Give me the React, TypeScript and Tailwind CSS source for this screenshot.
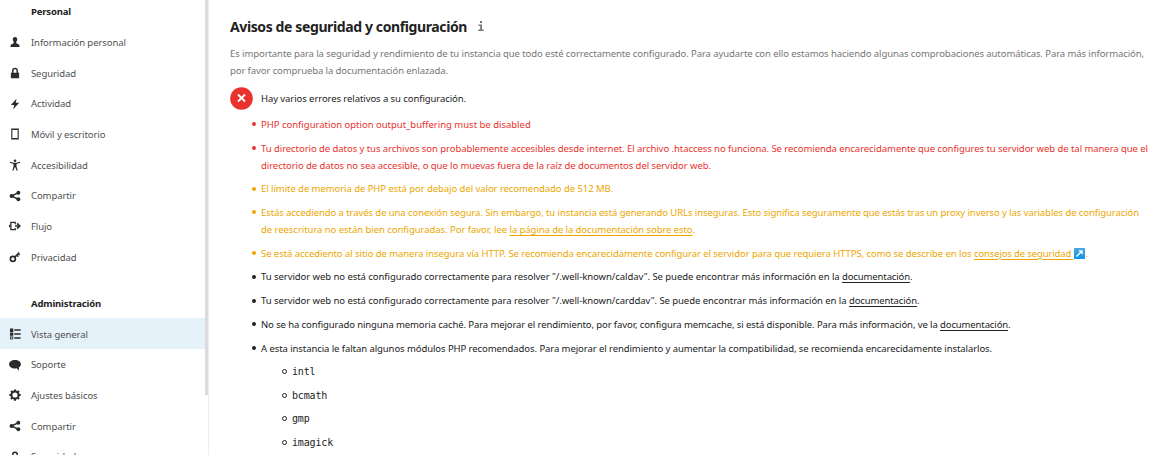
import type { ReactNode } from 'react'

function Icon({ children }: { children: ReactNode }) {
  return (
    <svg viewBox="0 0 16 16" className="h-3 w-3 shrink-0" fill="#2b2b2b">
      {children}
    </svg>
  )
}

const icons = {
  user: (
    <Icon>
      <path d="M8 1.200c-2 0-3 1.300-3 3 0 1.600.6 2.700 1.300 3.400v1.700c-.3.900-3.900 1.400-4.300 3.200V14.500h12v-2c-.4-1.800-4-2.300-4.300-3.200V7.600C10.400 6.900 11 5.800 11 4.200c0-1.700-1-3-3-3z" />
    </Icon>
  ),
  lock: (
    <Icon>
      <path d="M8 1C5.700 1 4 2.700 4 5v2.500H2.500V15h11V7.500H12V5c0-2.300-1.700-4-4-4zm0 2c1.200 0 2 .8 2 2v2.500H6V5c0-1.200.8-2 2-2z" />
    </Icon>
  ),
  activity: (
    <Icon>
      <path d="M10 1 2.500 9.200H7L5.600 15l8-8.600H9z" />
    </Icon>
  ),
  phone: (
    <Icon>
      <path d="M3 .8h10v14.400H3zM4.500 2.800v10.400h7V2.800z" fillRule="evenodd" />
    </Icon>
  ),
  access: (
    <Icon>
      <circle cx="8" cy="2.300" r="1.800" />
      <path d="M1.500 3.600 6 5h4l4.500-1.400.4 1.300L10 6.800V10l1.600 5.200-1.300.5L8.300 11h-.6l-2 4.700-1.300-.5L6 10V6.800L1.100 4.900z" />
    </Icon>
  ),
  share: (
    <Icon>
      <path d="M12.500 3.600 3.500 8l9 4.400" fill="none" stroke="#2b2b2b" strokeWidth="2" />
      <circle cx="3.500" cy="8" r="2.800" />
      <circle cx="12.500" cy="3.600" r="2.600" />
      <circle cx="12.500" cy="12.400" r="2.600" />
    </Icon>
  ),
  flow: (
    <svg viewBox="0 0 16 16" className="h-3 w-3 shrink-0" fill="none" stroke="#2b2b2b" strokeWidth="1.700">
      <path d="M8.300 5.500V3.300H2.500v9.400h5.800v-2.200M.6 6.200v3.600M8 8h6" />
      <path d="m10.800 4.500 3.500 3.500-3.500 3.500" strokeWidth="2.200" />
    </svg>
  ),
  key: (
    <Icon>
      <circle cx="5.200" cy="10.500" r="3.300" fill="none" stroke="#2b2b2b" strokeWidth="2.200" />
      <path d="M7.300 8.500 13.700 2.200M10.300 5.400l2.100 2.100M12.300 3.500l1.900 1.900" fill="none" stroke="#2b2b2b" strokeWidth="2" />
    </Icon>
  ),
  list: (
    <Icon>
      <path d="M1.300.8h4.400v4.400H1.300zM1.300 6h4.400v4.400H1.300zM7 1.800h8.500v2H7zM7 7h8.500v2H7zM7 12.200h8.500v2H7z" />
      <path d="M1.900 11.700h3.200v3H1.900z" fill="none" stroke="#2b2b2b" strokeWidth="1.200" />
    </Icon>
  ),
  comment: (
    <Icon>
      <path d="M8 1.200C3.500 1.200.1 3.600.1 6.900c0 3.400 3.400 5.600 7.900 5.600.8 0 1.500 0 2.200-.2L13.200 15.500v-4.400c1.700-1 2.700-2.500 2.700-4.200 0-3.300-3.400-5.700-7.900-5.700z" />
    </Icon>
  ),
  gear: (
    <svg viewBox="0 0 16 16" className="h-3 w-3 shrink-0" fill="none" stroke="#2b2b2b">
      <circle cx="8" cy="8" r="4.800" strokeWidth="2.700" />
      <path
        d="M8 .5v2.500M8 13v2.500M.5 8H3M13 8h2.500M2.700 2.700l1.600 1.600M11.700 11.700l1.600 1.600M13.300 2.700l-1.600 1.600M4.300 11.700l-1.600 1.600"
        strokeWidth="2.900"
      />
    </svg>
  ),
  lockOutline: (
    <svg viewBox="0 0 16 16" className="h-3 w-3 shrink-0" fill="none" stroke="#2b2b2b" strokeWidth="2">
      <path d="M5 8V4.500a3 3 0 0 1 6 0V8M3 8h10v6.500H3z" />
    </svg>
  ),
}

function NavItem({ icon, label, active }: { icon: ReactNode; label: string; active?: boolean }) {
  return (
    <li
      className={`flex items-center gap-[9.6px] pl-[9.4px] ${
        active ? 'mt-[-0.5px] h-[31.2px] bg-[#e5f2fa] pt-[0.5px]' : 'h-[30.7px]'
      }`}
    >
      {icon}
      <span className="tracking-[-0.08px] text-[#505050]">{label}</span>
    </li>
  )
}

function Caption({ children }: { children: ReactNode }) {
  return <h3 className="flex h-[30.7px] items-center pl-[31px] font-bold tracking-[-0.15px] text-[#222]">{children}</h3>
}

function Item({ children, tone }: { children: ReactNode; tone: string }) {
  return (
    <li className={`flex ${tone}`}>
      <span className="mt-[6.5px] mr-[5px] h-[4px] w-[4px] shrink-0 rounded-full bg-current" />
      <div>{children}</div>
    </li>
  )
}

function Link({ children, tight }: { children: ReactNode; tight: string }) {
  return (
    <a href="#" className={`underline decoration-1 underline-offset-[1.5px] ${tight}`}>
      {children}
    </a>
  )
}

const red = 'text-[#e9322d]'
const amber = 'text-[#eca700]'
const dark = 'text-[#222]'

export default function App() {
  return (
    <div className="flex h-[455px] w-[1170px] overflow-hidden bg-white font-['Noto_Sans',sans-serif] text-[9.5px] leading-[17px] whitespace-nowrap">
      <aside className="flex h-full w-[209px] shrink-0 border-r border-[#ededed]">
        <nav className="mt-[-3.7px] w-[205px]">
          <Caption>Personal</Caption>
          <ul>
            <NavItem icon={icons.user} label="Información personal" />
            <NavItem icon={icons.lock} label="Seguridad" />
            <NavItem icon={icons.activity} label="Actividad" />
            <NavItem icon={icons.phone} label="Móvil y escritorio" />
            <NavItem icon={icons.access} label="Accesibilidad" />
            <NavItem icon={icons.share} label="Compartir" />
            <NavItem icon={icons.flow} label="Flujo" />
            <NavItem icon={icons.key} label="Privacidad" />
          </ul>
          <div className="pt-[15.5px]">
            <Caption>Administración</Caption>
          </div>
          <ul>
            <NavItem icon={icons.list} label="Vista general" active />
            <NavItem icon={icons.comment} label="Soporte" />
            <NavItem icon={icons.gear} label="Ajustes básicos" />
            <NavItem icon={icons.share} label="Compartir" />
            <NavItem icon={icons.lockOutline} label="Seguridad" />
          </ul>
        </nav>
        <div className="h-[395px] w-[3px] bg-[#dbdbdb]" />
      </aside>

      <main className="flex-1 pt-[16px] pl-[21px]">
        <header className="flex h-[20px] items-center gap-[11px]">
          <h2 className="w-[237px] text-[14px] font-bold tracking-[-0.386px] text-[#222]">
            Avisos de seguridad y configuración
          </h2>
          <svg viewBox="0 0 6 10" className="mt-[-1px] h-[10px] w-[6px]" fill="#777">
            <path d="M2 0h2v2H2zM.5 3.500H4v5h1.700V10H.2V8.500h2V5H.5z" />
          </svg>
        </header>

        <p className="mt-[9px] text-[#767676]">
          <span className="block tracking-[-0.08px]">
            Es importante para la seguridad y rendimiento de tu instancia que todo esté correctamente configurado. Para
            ayudarte con ello estamos haciendo algunas comprobaciones automáticas. Para más información,
          </span>
          <span className="block tracking-[-0.09px]">por favor comprueba la documentación enlazada.</span>
        </p>

        <div className="mt-[7.5px] flex items-center gap-[8px]">
          <svg viewBox="0 0 23 23" className="h-[23px] w-[23px]">
            <circle cx="11.500" cy="11.500" r="11.300" fill="#e9322d" />
            <path d="m8 7.500 7 7m0-7-7 7" stroke="#fff" strokeWidth="1.800" />
          </svg>
          <span className="mt-[1px] tracking-[-0.078px] text-[#222]">
            Hay varios errores relativos a su configuración.
          </span>
        </div>

        <ul className="mt-[6.3px] flex flex-col gap-[6.73px] pl-[22px]">
          <Item tone={red}>
            <span className="tracking-[-0.01px]">PHP configuration option output_buffering must be disabled</span>
          </Item>
          <Item tone={red}>
            <span className="block tracking-[-0.059px]">
              Tu directorio de datos y tus archivos son probablemente accesibles desde internet. El archivo .htaccess no
              funciona. Se recomienda encarecidamente que configures tu servidor web de tal manera que el
            </span>
            <span className="block tracking-[-0.063px]">
              directorio de datos no sea accesible, o que lo muevas fuera de la raíz de documentos del servidor web.
            </span>
          </Item>
          <Item tone={amber}>
            <span className="tracking-[-0.06px]">
              El límite de memoria de PHP está por debajo del valor recomendado de 512 MB.
            </span>
          </Item>
          <Item tone={amber}>
            <span className="block tracking-[-0.082px]">
              Estás accediendo a través de una conexión segura. Sin embargo, tu instancia está generando URLs inseguras.
              Esto significa seguramente que estás tras un proxy inverso y las variables de configuración
            </span>
            <span className="block tracking-[-0.044px]">
              de reescritura no están bien configuradas. Por favor, lee{' '}
              <Link tight="tracking-[-0.077px]">la página de la documentación sobre esto</Link>.
            </span>
          </Item>
          <Item tone={amber}>
            <span className="tracking-[-0.0635px]">
              Se está accediento al sitio de manera insegura vía HTTP. Se recomienda encarecidamente configurar el
              servidor para que requiera HTTPS, como se describe en los{' '}
              <Link tight="tracking-[-0.14px]">
                consejos de seguridad{' '}
                <svg viewBox="0 0 11 11" className="ml-[1px] inline h-[11px] w-[11px] align-[-2px]">
                  <defs>
                    <linearGradient id="ext" x1="0" y1="0" x2="0" y2="1">
                      <stop offset="0" stopColor="#4aa9e0" />
                      <stop offset="1" stopColor="#0a93ea" />
                    </linearGradient>
                  </defs>
                  <rect width="11" height="11" rx=".8" fill="url(#ext)" />
                  <path d="M2.500 8.500 7.500 3.500" stroke="#fff" strokeWidth="1.400" />
                  <path d="M4.300 2.300h4.400v4.400z" fill="#fff" />
                </svg>
              </Link>
              .
            </span>
          </Item>
          <Item tone={dark}>
            <span className="tracking-[-0.055px]">
              Tu servidor web no está configurado correctamente para resolver "/.well-known/caldav". Se puede encontrar
              más información en la <Link tight="tracking-[-0.117px]">documentación</Link>.
            </span>
          </Item>
          <Item tone={dark}>
            <span className="tracking-[-0.056px]">
              Tu servidor web no está configurado correctamente para resolver "/.well-known/carddav". Se puede encontrar
              más información en la <Link tight="tracking-[-0.117px]">documentación</Link>.
            </span>
          </Item>
          <Item tone={dark}>
            <span className="tracking-[-0.097px]">
              No se ha configurado ninguna memoria caché. Para mejorar el rendimiento, por favor, configura memcache, si
              está disponible. Para más información, ve la{' '}
              <Link tight="tracking-[-0.117px]">documentación</Link>.
            </span>
          </Item>
          <Item tone={dark}>
            <span className="block tracking-[-0.075px]">
              A esta instancia le faltan algunos módulos PHP recomendados. Para mejorar el rendimiento y aumentar la
              compatibilidad, se recomienda encarecidamente instalarlos.
            </span>
            <ul className="mt-[6.4px] flex flex-col gap-[6.7px] pl-[21px] font-['DejaVu_Sans_Mono',monospace] text-[10px] tracking-[-0.15px]">
              {['intl', 'bcmath', 'gmp', 'imagick'].map((name) => (
                <li key={name} className="flex h-[17px] items-center">
                  <span className="mr-[5px] h-[5px] w-[5px] rounded-full border border-[#222]" />
                  {name}
                </li>
              ))}
            </ul>
          </Item>
        </ul>
      </main>
    </div>
  )
}
